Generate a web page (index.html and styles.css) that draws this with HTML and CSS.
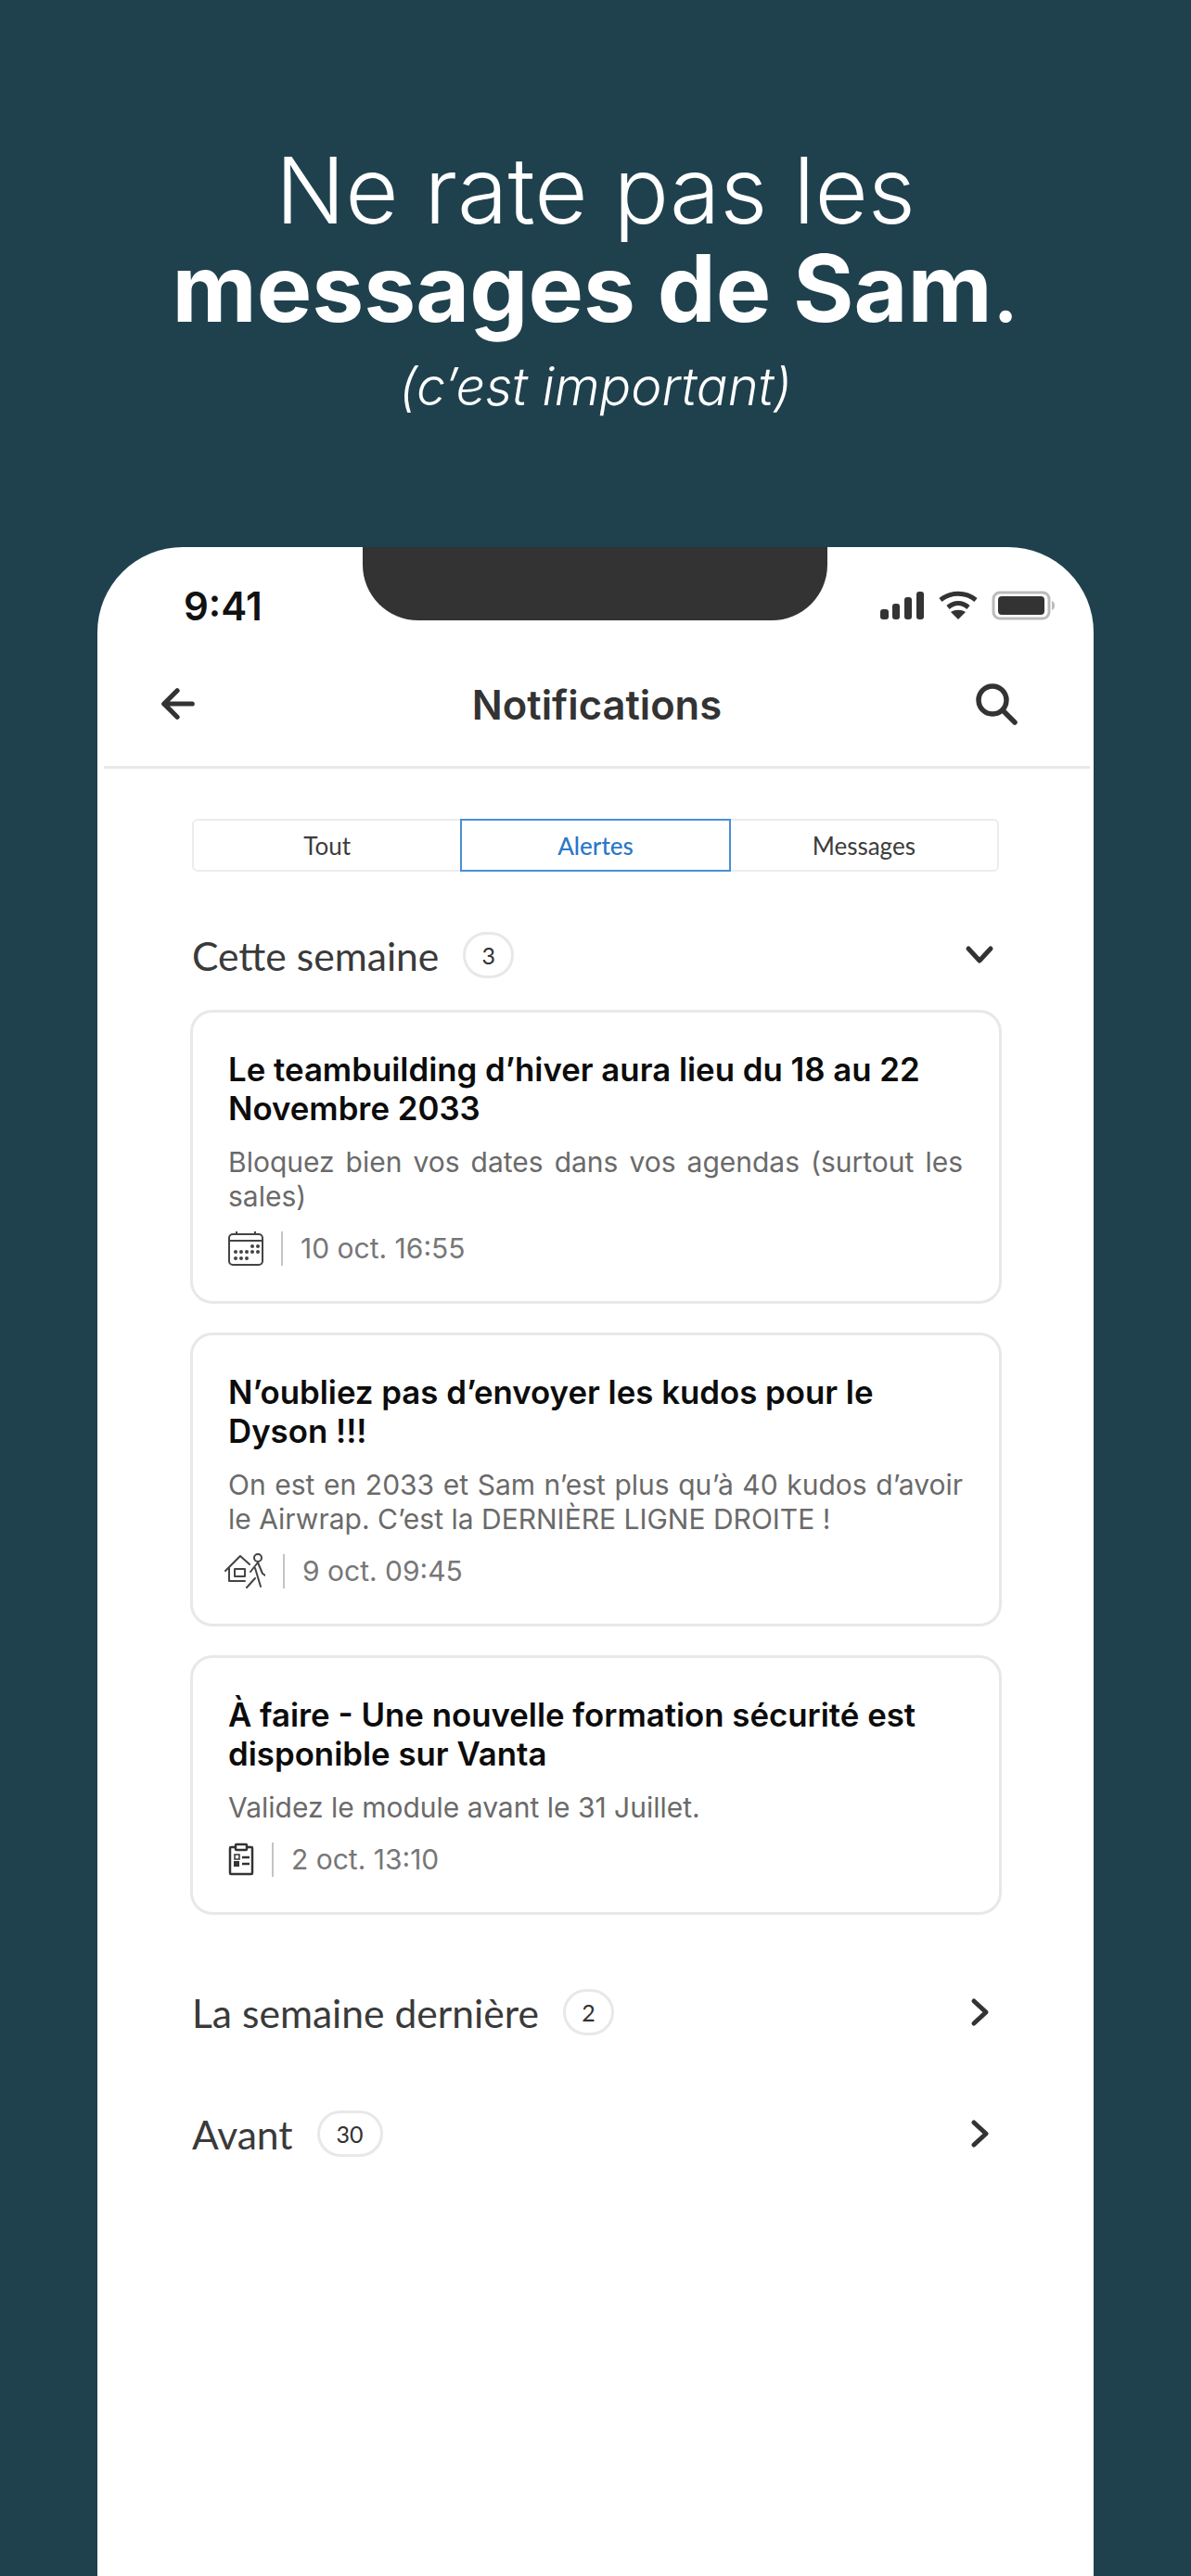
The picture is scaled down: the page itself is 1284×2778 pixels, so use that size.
FILE: index.html
```html
<!DOCTYPE html>
<html lang="fr">
<head>
<meta charset="utf-8">
<title>Notifications</title>
<link rel="stylesheet" href="styles.css">
</head>
<body>
<header class="hero">
  <p class="hero-line">Ne rate pas les</p>
  <p class="hero-line hero-strong"><strong>messages de Sam</strong><span class="hero-dot">.</span></p>
  <p class="hero-sub">(c’est important)</p>
</header>
<main class="phone">
  <div class="notch"></div>
  <div class="status">
    <span class="time">9:41</span>
    <div class="status-icons">
      <svg width="48" height="32" viewBox="0 0 48 32"><g fill="#333"><rect x="0" y="20" width="9" height="11" rx="3"/><rect x="13" y="14" width="8" height="17" rx="3"/><rect x="26" y="7" width="8" height="24" rx="3"/><rect x="39" y="1" width="8" height="30" rx="3"/></g></svg>
      <svg width="44" height="32" viewBox="0 0 44 32"><g fill="none" stroke="#333" stroke-width="5"><path d="M3 10C14 1 30 1 41 10"/><path d="M11 18C18 12 26 12 33 18"/></g><path d="M22 31L14 23C19 20 25 20 30 23Z" fill="#333"/></svg>
      <svg class="battery" width="70" height="32" viewBox="0 0 70 32"><rect x="2" y="2" width="60" height="28" rx="7" fill="none" stroke="#bbb" stroke-width="3"/><rect x="7" y="6" width="50" height="20" rx="4" fill="#333"/><path d="M65 11C69 12 69 20 65 21Z" fill="#bbb"/></svg>
    </div>
  </div>
  <nav class="topbar">
    <svg class="back" width="38" height="38" viewBox="0 0 40 40" fill="none" stroke="#333" stroke-width="5.5" stroke-linecap="round" stroke-linejoin="round"><path d="M36 20H4M19 5L4 20L19 35"/></svg>
    <h1 class="title">Notifications</h1>
    <svg class="search" width="46" height="46" viewBox="0 0 46 46" fill="none" stroke="#333" stroke-width="5.5" stroke-linecap="round"><circle cx="19" cy="19" r="15"/><path d="M30 30L43 43"/></svg>
  </nav>
  <div class="content">
    <div class="tabs">
      <div class="tab">Tout</div>
      <div class="tab tab-active">Alertes</div>
      <div class="tab">Messages</div>
    </div>
    <div class="section section-first">
      <div class="section-head"><span class="section-name">Cette semaine</span><span class="badge">3</span></div>
      <svg class="chev" width="32" height="32" viewBox="0 0 32 32" fill="none" stroke="#333" stroke-width="5" stroke-linecap="round" stroke-linejoin="round"><path d="M4 9L16 22L28 9"/></svg>
    </div>
    <article class="card">
      <h2 class="card-title">Le teambuilding d’hiver aura lieu du 18 au 22 Novembre 2033</h2>
      <p class="card-text">Bloquez bien vos dates dans vos agendas (surtout les sales)</p>
      <div class="meta">
        <svg class="ico" width="38" height="38" viewBox="0 0 38 38" fill="none" stroke="#444" stroke-width="2"><rect x="1" y="4" width="36" height="33" rx="4"/><path d="M1 11H37M9 1V5M29 1V5"/><g fill="#444" stroke="none"><circle cx="26" cy="17" r="2"/><circle cx="32" cy="17" r="2"/><circle cx="8" cy="23" r="2"/><circle cx="14" cy="23" r="2"/><circle cx="20" cy="23" r="2"/><circle cx="26" cy="23" r="2"/><circle cx="32" cy="23" r="2"/><circle cx="8" cy="30" r="2"/><circle cx="14" cy="30" r="2"/><circle cx="20" cy="30" r="2"/></g></svg>
        <span class="sep"></span><span class="date">10 oct. 16:55</span>
      </div>
    </article>
    <article class="card">
      <h2 class="card-title">N’oubliez pas d’envoyer les kudos pour le Dyson !!!</h2>
      <p class="card-text">On est en 2033 et Sam n’est plus qu’à 40 kudos d’avoir le Airwrap. C’est la DERNIÈRE LIGNE DROITE !</p>
      <div class="meta">
        <svg class="ico ico-wide" width="44" height="38" viewBox="0 0 44 38" fill="none" stroke="#444" stroke-width="2" stroke-linecap="round" stroke-linejoin="round"><path d="M1 19L17 3L27 12M5 16V30H22"/><rect x="11" y="17" width="11" height="8"/><circle cx="36" cy="5" r="4"/><path d="M36 10L28 20M36 10L41 22L44 24M33 16L36 26L39 36M33 27L24 37"/></svg>
        <span class="sep"></span><span class="date">9 oct. 09:45</span>
      </div>
    </article>
    <article class="card">
      <h2 class="card-title">À faire - Une nouvelle formation sécurité est disponible sur Vanta</h2>
      <p class="card-text">Validez le module avant le 31 Juillet.</p>
      <div class="meta">
        <svg class="ico ico-narrow" width="28" height="36" viewBox="0 0 28 36" fill="none" stroke="#333" stroke-width="2.5"><rect x="2" y="5" width="24" height="29" rx="1"/><rect x="8" y="2" width="12" height="6" rx="1" fill="#fff"/><rect x="7" y="13" width="5" height="5" stroke-width="1.5"/><rect x="6" y="20" width="6" height="6" fill="#333" stroke="none"/><path d="M15 16H23M15 23H23" stroke-width="2.5"/></svg>
        <span class="sep"></span><span class="date">2 oct. 13:10</span>
      </div>
    </article>
    <div class="section section-second">
      <div class="section-head"><span class="section-name">La semaine dernière</span><span class="badge">2</span></div>
      <svg class="chev" width="32" height="32" viewBox="0 0 32 32" fill="none" stroke="#333" stroke-width="5" stroke-linecap="round" stroke-linejoin="round"><path d="M10 4L23 16L10 28"/></svg>
    </div>
    <div class="section section-third">
      <div class="section-head"><span class="section-name">Avant</span><span class="badge badge-wide">30</span></div>
      <svg class="chev" width="32" height="32" viewBox="0 0 32 32" fill="none" stroke="#333" stroke-width="5" stroke-linecap="round" stroke-linejoin="round"><path d="M10 4L23 16L10 28"/></svg>
    </div>
  </div>
</main>
</body>
</html>
```

FILE: styles.css
```css
* { box-sizing: border-box; }
html, body { margin: 0; padding: 0; }
body {
  width: 1284px;
  height: 2778px;
  overflow: hidden;
  background: #1f414e;
  font-family: "Inter", "Liberation Sans", sans-serif;
  color: #333;
}
.hero { height: 590px; padding-top: 153px; text-align: center; color: #fff; font-family: "Inter", sans-serif; }
.hero-line { margin: 0; font-size: 99px; line-height: 105px; font-weight: 300; }
.hero-strong { font-size: 100px; }
.hero-strong strong { font-weight: 700; }
.hero-dot { font-weight: 400; }
.hero-sub { margin: 19px 0 0; font-size: 56px; line-height: 70px; font-style: italic; font-weight: 300; }

.phone {
  position: relative;
  width: 1074px;
  height: 2188px;
  margin-left: 105px;
  background: #fff;
  border-radius: 92px 92px 0 0;
}
.notch {
  position: absolute;
  left: 286px;
  top: 0;
  width: 501px;
  height: 79px;
  background: #333;
  border-radius: 0 0 60px 60px;
}
.status { height: 90px; padding: 36px 40px 0 93px; display: flex; justify-content: space-between; align-items: center; }
.time { font-size: 42px; font-weight: 600; color: #111; font-family: "Inter", sans-serif; }
.status-icons { display: flex; align-items: center; gap: 14px; }
.topbar {
  height: 149px;
  margin: 0 4px 0 7px;
  padding: 14px 59px 0;
  display: grid;
  grid-template-columns: 1fr auto 1fr;
  align-items: center;
  border-bottom: 3px solid #e8e8e8;
}
.back { justify-self: start; margin-left: 2px; margin-bottom: 2px; }
.search { justify-self: end; margin-right: 19px; margin-bottom: 2px; }
.title { margin: 0; font-size: 43.5px; font-weight: 600; color: #333; }
.content { padding: 54px 102px 0 102px; }
.tabs { display: flex; height: 57px; border: 2px solid #ececec; border-radius: 6px; }
.tab { flex: 1; display: flex; align-items: center; justify-content: center; font-family: "Lato", sans-serif; font-size: 26px; color: #3c3c3c; }
.tab-active { margin: -2px 0; border: 2px solid #4a8fd6; color: #2a78c8; font-weight: 500; }
.section { display: flex; align-items: center; justify-content: space-between; padding-right: 5px; height: 50px; }
.section-first { margin-top: 65px; margin-bottom: 34px; }
.section-second { margin-top: 80px; }
.section-third { margin-top: 81px; }
.section-head { display: flex; align-items: center; gap: 26px; }
.section-name { font-family: "Lato", sans-serif; font-size: 42.6px; color: #3a3a3a; }
.badge {
  min-width: 55px;
  height: 50px;
  padding: 0 10px;
  border: 3px solid #e8e8e8;
  border-radius: 25px;
  display: flex;
  align-items: center;
  justify-content: center;
  font-family: "Lato", sans-serif;
  font-size: 25px;
  color: #333;
}
.badge-wide { min-width: 71px; }
.card {
  width: 875px;
  margin: 0 0 31px -2px;
  padding: 40px 39px 38px 38px;
  border: 3px solid #e8e8e8;
  border-radius: 24px;
  min-height: 280px;
}
.card-title { margin: 0; font-size: 34.8px; line-height: 42px; font-weight: 600; color: #0c0c0c; }
.card-text { margin: 19px 0 0; font-size: 30px; line-height: 37px; color: #6a6a6a; text-align: justify; }
.meta { display: flex; align-items: center; margin-top: 18px; height: 38px; }
.ico { flex: none; }
.ico-wide { margin-left: -4px; }
.sep { width: 2px; height: 37px; background: #c4c4c4; margin: 0 19px; }
.date { font-size: 30px; color: #777; }
```
